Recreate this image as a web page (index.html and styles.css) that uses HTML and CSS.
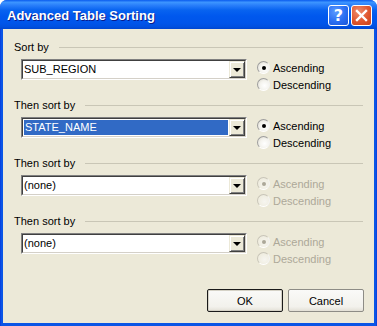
FILE: index.html
```html
<!DOCTYPE html>
<html>
<head>
<meta charset="utf-8">
<link rel="stylesheet" href="styles.css">
</head>
<body>
<div class="window">
  <div class="titlebar">
    <span class="title">Advanced Table Sorting</span>
    <div class="tbtns">
      <span class="tbtn help">?</span>
      <span class="tbtn close"><svg width="13" height="13" viewBox="0 0 13 13"><path d="M2 2 L11 11 M11 2 L2 11" stroke="#fff" stroke-width="2.4" stroke-linecap="square"/></svg></span>
    </div>
  </div>
  <div class="body">
    <section class="group">
      <div class="ghead"><span>Sort by</span><i class="rule"></i></div>
      <div class="grow">
        <div class="combo"><div class="inner"><div class="field"><span>SUB_REGION</span></div><div class="arrow"><i></i></div></div></div>
        <div class="radios">
          <label class="radio checked"><span class="dot"></span>Ascending</label>
          <label class="radio"><span class="dot"></span>Descending</label>
        </div>
      </div>
    </section>
    <section class="group">
      <div class="ghead"><span>Then sort by</span><i class="rule"></i></div>
      <div class="grow">
        <div class="combo"><div class="inner"><div class="field"><span class="sel">STATE_NAME</span></div><div class="arrow"><i></i></div></div></div>
        <div class="radios">
          <label class="radio checked"><span class="dot"></span>Ascending</label>
          <label class="radio"><span class="dot"></span>Descending</label>
        </div>
      </div>
    </section>
    <section class="group">
      <div class="ghead"><span>Then sort by</span><i class="rule"></i></div>
      <div class="grow">
        <div class="combo"><div class="inner"><div class="field"><span>(none)</span></div><div class="arrow"><i></i></div></div></div>
        <div class="radios disabled">
          <label class="radio checked"><span class="dot"></span>Ascending</label>
          <label class="radio"><span class="dot"></span>Descending</label>
        </div>
      </div>
    </section>
    <section class="group">
      <div class="ghead"><span>Then sort by</span><i class="rule"></i></div>
      <div class="grow">
        <div class="combo"><div class="inner"><div class="field"><span>(none)</span></div><div class="arrow"><i></i></div></div></div>
        <div class="radios disabled">
          <label class="radio checked"><span class="dot"></span>Ascending</label>
          <label class="radio"><span class="dot"></span>Descending</label>
        </div>
      </div>
    </section>
    <div class="buttons">
      <button class="btn default">OK</button>
      <button class="btn">Cancel</button>
    </div>
  </div>
</div>
</body>
</html>
```
FILE: styles.css
```css
html, body {
  margin: 0;
  padding: 0;
  background: #fff;
}
body {
  font-family: "Liberation Sans", Arial, sans-serif;
  font-size: 11px;
  color: #000;
}
.window {
  width: 377px;
  height: 326px;
  box-sizing: border-box;
  background: linear-gradient(90deg, #0831D9 0, #0A55E6 1px, #0A55E6 376px, #0831D9 377px);
  border-radius: 7px 7px 0 0;
  display: flex;
  flex-direction: column;
  overflow: hidden;
}
.titlebar {
  height: 29px;
  flex: none;
  display: flex;
  align-items: center;
  padding: 0 5px 0 7px;
  background: linear-gradient(#0A5BEE 0%, #3D95FF 8%, #2A7FFA 18%, #0863F0 35%, #0058EE 55%, #0055EA 80%, #0050E0 92%, #0046D0 100%);
}
.title {
  flex: 1;
  color: #fff;
  font-weight: bold;
  font-size: 13px;
  text-shadow: 1px 1px 0 #0A1C8C;
  padding-top: 1px;
}
.tbtns {
  display: flex;
  gap: 2px;
  padding-top: 1px;
}
.tbtn {
  width: 21px;
  height: 21px;
  box-sizing: border-box;
  border: 1px solid #fff;
  border-radius: 3px;
  display: flex;
  align-items: center;
  justify-content: center;
}
.help {
  background: radial-gradient(circle at 35% 30%, #5C9BFF 0%, #2A6EF2 55%, #1A55D8 100%);
  color: #fff;
  font-weight: bold;
  font-size: 16px;
  font-family: "DejaVu Sans", sans-serif;
}
.close {
  background: radial-gradient(circle at 35% 30%, #EE8D6E 0%, #E0572F 55%, #C8421B 100%);
}
.body {
  flex: 1;
  margin: 0 3px 3px 3px;
  background: #ECE9D8;
  padding: 11px 11px 0 11px;
}
.group {
  height: 58px;
}
.ghead {
  display: flex;
  align-items: center;
  height: 14px;
  line-height: 14px;
}
.rule {
  flex: 1;
  margin-left: 10px;
  border-top: 1px solid #C9C6B6;
  height: 0;
}
.grow {
  display: flex;
  margin-top: 5px;
  margin-left: 7px;
  gap: 10px;
}
.combo {
  width: 226px;
  height: 21px;
  box-sizing: border-box;
  border: 1px solid;
  border-color: #808080 #fff #fff #808080;
}
.inner {
  height: 100%;
  box-sizing: border-box;
  border: 1px solid;
  border-color: #404040 #D4D0C8 #D4D0C8 #404040;
  background: #fff;
  display: flex;
}
.field {
  flex: 1;
  padding: 1px 1px 1px 1px;
  display: flex;
}
.field span {
  flex: 1;
  line-height: 15px;
  padding-left: 0;
}
.field .sel {
  background: #316AC5;
  color: #fff;
  padding-left: 1px;
}
.arrow {
  width: 16px;
  height: 17px;
  box-sizing: border-box;
  background: #ECE9D8;
  border: 1px solid;
  border-color: #ECE9D8 #404040 #404040 #ECE9D8;
  box-shadow: inset 1px 1px 0 #fff, inset -1px -1px 0 #808080;
  display: flex;
  align-items: center;
  justify-content: center;
}
.arrow i {
  width: 0;
  height: 0;
  border-left: 4px solid transparent;
  border-right: 4px solid transparent;
  border-top: 4px solid #000;
  margin-top: 1px;
}
.radios {
  display: flex;
  flex-direction: column;
}
.radio {
  height: 17px;
  display: flex;
  align-items: center;
  gap: 3px;
}
.dot {
  width: 13px;
  height: 13px;
  box-sizing: border-box;
  border-radius: 50%;
  border: 1px solid;
  border-color: #9D9D9D #F4F4F4 #FFFFFF #9D9D9D;
  background: radial-gradient(circle at 60% 60%, #FFFFFF 0%, #F4F3EE 50%, #D8D5CA 100%);
  display: flex;
  align-items: center;
  justify-content: center;
}
.checked .dot::after {
  content: "";
  width: 4px;
  height: 4px;
  border-radius: 50%;
  background: #000;
}
.disabled {
  color: #ACA899;
}
.disabled .dot {
  border-color: #C8C5B8 #F4F4F4 #FFFFFF #C8C5B8;
  background: radial-gradient(circle at 60% 60%, #F6F5F0 0%, #ECE9D8 100%);
}
.disabled .checked .dot::after {
  background: #ACA899;
}
.buttons {
  display: flex;
  justify-content: flex-end;
  gap: 5px;
  margin-top: 17px;
  margin-right: -1px;
}
.btn {
  width: 76px;
  height: 23px;
  box-sizing: border-box;
  font-family: "Liberation Sans", Arial, sans-serif;
  font-size: 11px;
  color: #000;
  border: 1px solid #8D8C86;
  border-radius: 2px;
  background: linear-gradient(#FAFAF8, #F2F1EC 80%, #E3E0D6);
  padding: 0;
}
.btn.default {
  border-color: #1A1A1A;
  box-shadow: inset 0 0 0 1px #D5D2C6;
}
```
